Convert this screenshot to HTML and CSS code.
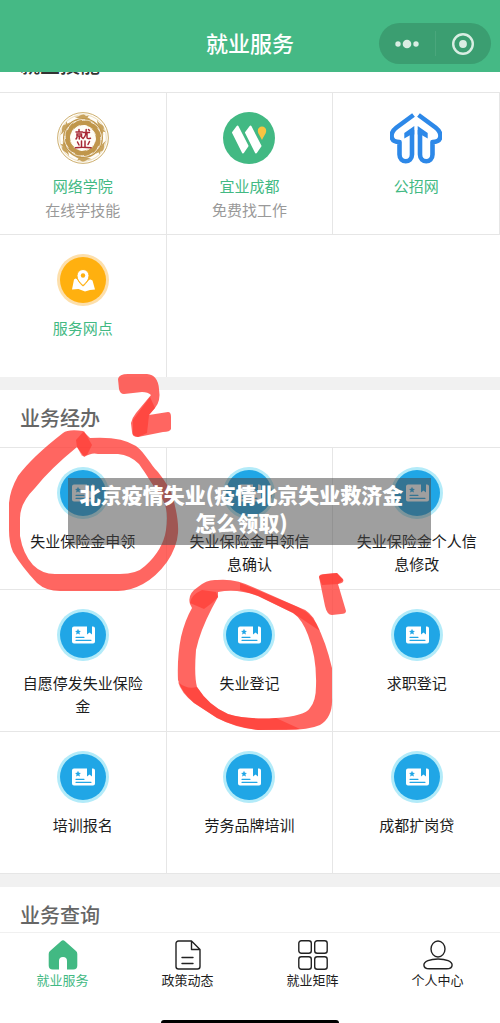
FILE: index.html
```html
<!DOCTYPE html>
<html lang="zh-CN">
<head>
<meta charset="utf-8">
<meta name="viewport" content="width=device-width, initial-scale=1">
<title>就业服务</title>
<link rel="stylesheet" href="styles.css">
</head>
<body>
<svg class="symbols" aria-hidden="true">
  <symbol id="card" viewBox="0 0 52 52">
    <circle cx="26" cy="26" r="26" fill="#b3ebf9"/>
    <circle cx="26" cy="26" r="23" fill="#20a6e6"/>
    <path d="M17 17.500h13v8l2.500-2 2.500 2v-8h1a2 2 0 0 1 2 2v13a2 2 0 0 1-2 2H17a2 2 0 0 1-2-2v-13a2 2 0 0 1 2-2z" fill="#fff"/>
    <path d="M21 19.800l.9 1.900 2.100.2-1.600 1.400.5 2.200-1.900-1.100-1.900 1.100.5-2.200-1.600-1.400 2.100-.2z" fill="#20a6e6"/>
    <path d="M19 28.300h8M19 31.300h15" stroke="#20a6e6" stroke-width="1.200" stroke-linecap="round"/>
  </symbol>
  <symbol id="swirl" viewBox="0 0 52 52">
    <path d="M22 15.500c5-3 10-2 14.500 2-4-2-9-2.500-14.500-.5z" fill="#fffdf8"/>
    <path d="M25 8.500c5-1 9 0 12 3" fill="none" stroke="#fffdf8" stroke-width=".7"/>
  </symbol>
  <symbol id="dragon" viewBox="0 0 52 52">
    <path d="M17 4.500c3 .8 5-.5 7-1.500s4-.5 5 1l3-.5-1.500 2 3 1.500-4-.2-2 1.700-1.500-2c-3-.5-5 .5-9-2z" fill="#c8a35e"/>
  </symbol>
</svg>

<div class="app">
  <header class="nav">
    <h1 class="nav-title">就业服务</h1>
    <div class="capsule">
      <button class="capsule-btn" type="button" aria-label="更多">
        <svg width="26" height="26" viewBox="0 0 26 26" fill="#d9eee3"><circle cx="4" cy="13" r="2.700"/><circle cx="13" cy="13" r="4.300"/><circle cx="22" cy="13" r="2.700"/></svg>
      </button>
      <button class="capsule-btn" type="button" aria-label="关闭">
        <svg width="26" height="26" viewBox="0 0 26 26"><circle cx="13" cy="13" r="9.800" fill="none" stroke="#d9eee3" stroke-width="2.400"/><circle cx="13" cy="13" r="3.900" fill="#d9eee3"/></svg>
      </button>
    </div>
  </header>

  <main class="content">
    <section class="section section-first">
      <div class="heading-clip"><h2 class="heading">就业技能</h2></div>
      <div class="grid services">
        <a class="cell" href="#">
          <svg class="icon" viewBox="0 0 52 52">
            <circle cx="26" cy="26" r="25.400" fill="#fffdf8" stroke="#ceb071" stroke-width="1"/>
            <circle cx="26" cy="26" r="23.300" fill="none" stroke="#dfc99b" stroke-width=".6"/>
            <use href="#dragon"/><use href="#dragon" transform="rotate(60 26 26)"/><use href="#dragon" transform="rotate(120 26 26)"/><use href="#dragon" transform="rotate(180 26 26)"/><use href="#dragon" transform="rotate(240 26 26)"/><use href="#dragon" transform="rotate(300 26 26)"/>
            <circle cx="26" cy="26" r="15.500" fill="none" stroke="#c0964b" stroke-width="9"/>
            <use href="#swirl"/><use href="#swirl" transform="rotate(30 26 26)"/><use href="#swirl" transform="rotate(60 26 26)"/><use href="#swirl" transform="rotate(90 26 26)"/><use href="#swirl" transform="rotate(120 26 26)"/><use href="#swirl" transform="rotate(150 26 26)"/><use href="#swirl" transform="rotate(180 26 26)"/><use href="#swirl" transform="rotate(210 26 26)"/><use href="#swirl" transform="rotate(240 26 26)"/><use href="#swirl" transform="rotate(270 26 26)"/><use href="#swirl" transform="rotate(300 26 26)"/><use href="#swirl" transform="rotate(330 26 26)"/>
            <circle cx="26" cy="26" r="11.500" fill="#fffdf8"/>
            <g fill="none" stroke="#a82835" stroke-width="1.500" stroke-linecap="round">
              <path d="M22 17.500v2M19 20h6.500M20 22h4.500v2H20zM22.300 24v3M20 25.500l-1 1.500M24.500 25l1 1M26.500 20.500h6M29.200 17.500c0 4-.5 7-3 9M30 21v4.500c0 1.500 2 1.200 3.500 .8M31.500 17.500l1 1"/>
              <path d="M24.500 29v6M28 29v6M20.500 30l1.500 3M32.500 29.500l-1.500 3M18.500 35.800c5-.8 10-.5 15.500 0"/>
            </g>
          </svg>
          <span class="label">网络学院</span>
          <span class="sub">在线学技能</span>
        </a>
        <a class="cell" href="#">
          <svg class="icon" viewBox="0 0 52 52">
            <circle cx="26" cy="26" r="26" fill="#42b983"/>
            <g fill="#fff" stroke="#fff" stroke-width="2" stroke-linejoin="round"><path d="M10 20.500l4.500-6L24.500 34l-4.500 6.500z"/><path d="M23 20.500l4.500-6L37.500 34 33 40.500z"/></g>
            <path d="M39 14.500a4.200 4.200 0 0 1 4.200 4.200c0 3-2.700 5.500-4.200 9.300-1.500-3.800-4.200-6.300-4.200-9.300a4.200 4.200 0 0 1 4.200-4.200z" fill="#f9c441"/>
          </svg>
          <span class="label">宜业成都</span>
          <span class="sub">免费找工作</span>
        </a>
        <a class="cell" href="#">
          <svg class="icon" viewBox="0 0 52 52" fill="none" stroke="#2d88e8" stroke-width="4.600" stroke-linejoin="round">
            <path d="M23.500 3L6.500 15.500C-.5 21-.5 30 9.500 30v12.500c0 9 12.500 9 12.500 0V18"/>
            <path d="M28.500 3L45.500 15.500C52.500 21 52.500 30 42.500 30v12.500c0 9-12.500 9-12.500 0V18"/>
            <path d="M24.300 14l-10 7v5.500l7-4h3zM27.700 14l10 7v5.500l-7-4h-3z" fill="#2d88e8" stroke="none"/>
          </svg>
          <span class="label">公招网</span>
        </a>
        <a class="cell" href="#">
          <svg class="icon" viewBox="0 0 52 52">
            <circle cx="26" cy="26" r="26" fill="#fddfab"/><circle cx="26" cy="26" r="23" fill="#ffb00f"/>
            <path d="M18.500 24.500c2 0 3.500 5 7.500 8 4-3 5.500-7.500 7.500-7l2 1L38 35.500l-5 .5-5 1.500-6.500-2.500-6.500 .5 2-10z" fill="#fff"/>
            <path d="M26 31.500c-3.500-3-6-6-6-10a6 6 0 0 1 12 0c0 4-2.500 7-6 10z" fill="#fff" stroke="#ffb00f"/>
            <circle cx="26" cy="21.500" r="2.200" fill="#ffb00f"/>
          </svg>
          <span class="label">服务网点</span>
        </a>
      </div>
    </section>

    <section class="section">
      <h2 class="heading">业务经办</h2>
      <div class="grid business">
        <a class="cell" href="#"><svg class="icon"><use href="#card"/></svg><span class="label">失业保险金申领</span></a>
        <a class="cell" href="#"><svg class="icon"><use href="#card"/></svg><span class="label">失业保险金申领信息确认</span></a>
        <a class="cell" href="#"><svg class="icon"><use href="#card"/></svg><span class="label">失业保险金个人信息修改</span></a>
        <a class="cell" href="#"><svg class="icon"><use href="#card"/></svg><span class="label">自愿停发失业保险金</span></a>
        <a class="cell" href="#"><svg class="icon"><use href="#card"/></svg><span class="label">失业登记</span></a>
        <a class="cell" href="#"><svg class="icon"><use href="#card"/></svg><span class="label">求职登记</span></a>
        <a class="cell" href="#"><svg class="icon"><use href="#card"/></svg><span class="label">培训报名</span></a>
        <a class="cell" href="#"><svg class="icon"><use href="#card"/></svg><span class="label">劳务品牌培训</span></a>
        <a class="cell" href="#"><svg class="icon"><use href="#card"/></svg><span class="label">成都扩岗贷</span></a>
      </div>
    </section>

    <section class="section">
      <h2 class="heading">业务查询</h2>
    </section>
  </main>

  <nav class="tabs">
    <a class="tab tab-active" href="#">
      <svg class="tab-icon" viewBox="0 0 30 30"><path d="M13 1.200a3 3 0 0 1 4 0L28 11a4 4 0 0 1 1.300 3v11.500a4 4 0 0 1-4 4H19V21a4 4 0 0 0-8 0v8.500H4.700a4 4 0 0 1-4-4V14A4 4 0 0 1 2 11z" fill="#42b983"/></svg>
      <span>就业服务</span>
    </a>
    <a class="tab" href="#">
      <svg class="tab-icon" viewBox="0 0 30 30" fill="none" stroke="#222" stroke-width="1.400" stroke-linejoin="round" stroke-linecap="round"><path d="M18.500 1H5.500a2.500 2.500 0 0 0-2.500 2.500v23A2.500 2.500 0 0 0 5.500 29h19a2.500 2.500 0 0 0 2.500-2.500V9.500zM18.500 1v8.500H27M9 17.500h11M9 23.500h11"/></svg>
      <span>政策动态</span>
    </a>
    <a class="tab" href="#">
      <svg class="tab-icon" viewBox="0 0 30 30" fill="none" stroke="#222" stroke-width="1.400"><rect x=".8" y=".8" width="12.500" height="12.500" rx="2.500"/><rect x="16.700" y=".8" width="12.500" height="12.500" rx="2.500"/><rect x=".8" y="16.700" width="12.500" height="12.500" rx="2.500"/><rect x="16.700" y="16.700" width="12.500" height="12.500" rx="2.500"/></svg>
      <span>就业矩阵</span>
    </a>
    <a class="tab" href="#">
      <svg class="tab-icon" viewBox="0 0 30 30" fill="none" stroke="#222" stroke-width="1.400"><ellipse cx="15" cy="9" rx="7" ry="8"/><path d="M.9 25c0-3.500 6-6 14.100-6s14.100 2.500 14.100 6c0 3-2.500 3.800-5.500 3.800H6.400C3.400 28.800.9 28 .9 25z"/></svg>
      <span>个人中心</span>
    </a>
  </nav>
  <div class="home-indicator"></div>

  <svg class="marker" viewBox="0 0 500 1023" aria-hidden="true">
    <g fill="#ff3b34" fill-opacity=".78" fill-rule="evenodd">
      <path d="M63 433Q68 429 83 431L90 438Q121 436 136 446C146 454 150 464 158 472Q170 487 173 498Q179 520 178 533Q177 547 167 562Q156 577 143 584Q130 591 118 591H60Q46 591 37 583Q22 567 13 552Q9 543 9 530V503Q10 490 18 476Q32 457 63 433ZM77 447Q50 469 35 488Q20 503 20 518V536Q23 554 33 565Q42 574 55 574H120Q137 574 145 566Q163 550 166 530Q169 511 163 500C153 486 147 475 139 464Q130 455 118 454H98Q92 452 84 457Z"/>
      <path d="M190 604Q187 594 198 587Q207 579 217 580Q235 578 255 588L298 607Q311 611 316 623Q326 642 332 668V698Q333 717 320 725Q309 730 285 730H258Q236 728 217 718L194 703Q181 692 178 680Q177 657 181 637Q185 620 192 608ZM218 597L212 608Q200 631 196 650Q194 676 197 687Q209 706 228 714Q248 720 276 718Q305 716 310 708Q316 701 316 686Q317 658 308 635Q302 619 293 613L258 596Q237 588 218 592Z"/>
      <path d="M118 379Q119 374 128 374H147Q158 375 159 389Q161 401 155 408L149 415 168 412Q171 412 171 417V429Q170 432 163 432L138 437Q132 437 132 432L131 423Q132 418 136 413L151 395Q148 392 142 392L124 394Q120 394 119 389Z"/>
      <path d="M319 577Q319 574 325 574L337 573 343 579Q345 583 338 584L346 611Q346 614 341 614L332 615Q327 615 325 606Z"/>
    </g>
    <g fill="#ff3028" fill-opacity=".55">
      <path d="M76 440L84 431 92 445 87 455 82 456 77 447Z"/>
      <path d="M190 603Q191 595 202 590L216 592 218 597 212 603 204 609Z"/>
      <path d="M240 583L298 607Q314 615 320 631L293 613 258 596 240 590Z"/>
      <path d="M178 682Q187 690 197 687Q209 706 228 714Q248 720 276 718L300 729 258 730Q235 727 217 718L194 703Q181 693 178 682Z"/>
      <path d="M150 397L155 408 149 415 147 433 138 437 133 435 133 420Z"/>
      <path d="M319 577Q319 574 337 573L343 580 338 584 322 585Z"/>
    </g>
  </svg>
  <p class="caption">北京疫情失业(疫情北京失业救济金怎么领取)</p>
</div>
</body>
</html>
```
FILE: styles.css
```css
* { box-sizing: border-box; }

body {
  margin: 0;
  background: #fff;
  color: #1c1c1c;
  font-family: "Noto Sans CJK SC", sans-serif;
}

a { color: inherit; text-decoration: none; }

.symbols { display: none; }

.app {
  position: relative;
  display: flex;
  flex-direction: column;
  height: 100vh;
  overflow: hidden;
}

.nav {
  position: relative;
  flex: none;
  height: 72px;
  padding-top: 26px;
  background: #45b985;
}

.nav-title {
  margin: 0;
  color: #fff;
  font-size: 22px;
  font-weight: 500;
  line-height: 32px;
  text-align: center;
}

.capsule {
  position: absolute;
  top: 23px;
  right: 9px;
  display: flex;
  align-items: center;
  width: 112px;
  height: 41px;
  border-radius: 21px;
  background: #3b9e71;
}

.capsule-btn {
  display: flex;
  flex: 1;
  align-items: center;
  justify-content: center;
  height: 25px;
  padding: 0;
  border: 0;
  background: none;
}

.capsule-btn + .capsule-btn { border-left: 1px solid #4aa67c; }

.content {
  flex: 1;
  min-height: 0;
  overflow: hidden;
}

.section + .section { border-top: 13px solid #f1f1f1; }

.heading-clip {
  display: flex;
  align-items: flex-end;
  height: 20px;
  overflow: hidden;
}

.heading {
  margin: 0;
  padding: 13px 20px 14px;
  color: #666;
  font-size: 20px;
  font-weight: 500;
  line-height: 30px;
}

.section-first .heading {
  padding-bottom: 12px;
  color: #333;
}

.grid {
  display: grid;
  grid-template-columns: repeat(3, 1fr);
  border-top: 1px solid #e6e6e6;
}

.cell {
  display: flex;
  flex-direction: column;
  align-items: center;
  min-height: 142px;
  padding: 19px 20px 0;
  border-right: 1px solid #e6e6e6;
  border-bottom: 1px solid #e6e6e6;
  font-size: 15px;
  line-height: 23px;
  text-align: center;
}

.business .cell:nth-child(3n) { border-right: 0; }

.services .cell:last-child { border-bottom: 0; }

.icon {
  flex: none;
  width: 52px;
  height: 52px;
  margin-bottom: 10px;
}

.services .label { color: #42b983; }

.sub {
  margin-top: 1px;
  color: #999;
}

.tabs {
  display: flex;
  flex: none;
  padding: 7px 0 33px;
  border-top: 1px solid #f0f0f0;
  background: #fff;
}

.tab {
  display: flex;
  flex: 1;
  flex-direction: column;
  align-items: center;
  font-size: 13px;
  line-height: 20px;
}

.tab-active { color: #42b983; }

.tab-icon {
  width: 30px;
  height: 30px;
}

.home-indicator {
  position: absolute;
  bottom: 0;
  left: 50%;
  width: 178px;
  height: 3px;
  margin-left: -89px;
  border-radius: 3px 3px 0 0;
  background: #000;
}

.marker {
  position: absolute;
  top: 0;
  left: 0;
  width: 100%;
  pointer-events: none;
}

.caption {
  position: absolute;
  top: 478px;
  right: 69px;
  left: 68px;
  margin: 0;
  padding: 2px 24px 9px 8px;
  background: rgba(70, 70, 70, 0.52);
  color: #fff;
  font-size: 21px;
  font-weight: 900;
  line-height: 28px;
  text-align: center;
}
```
